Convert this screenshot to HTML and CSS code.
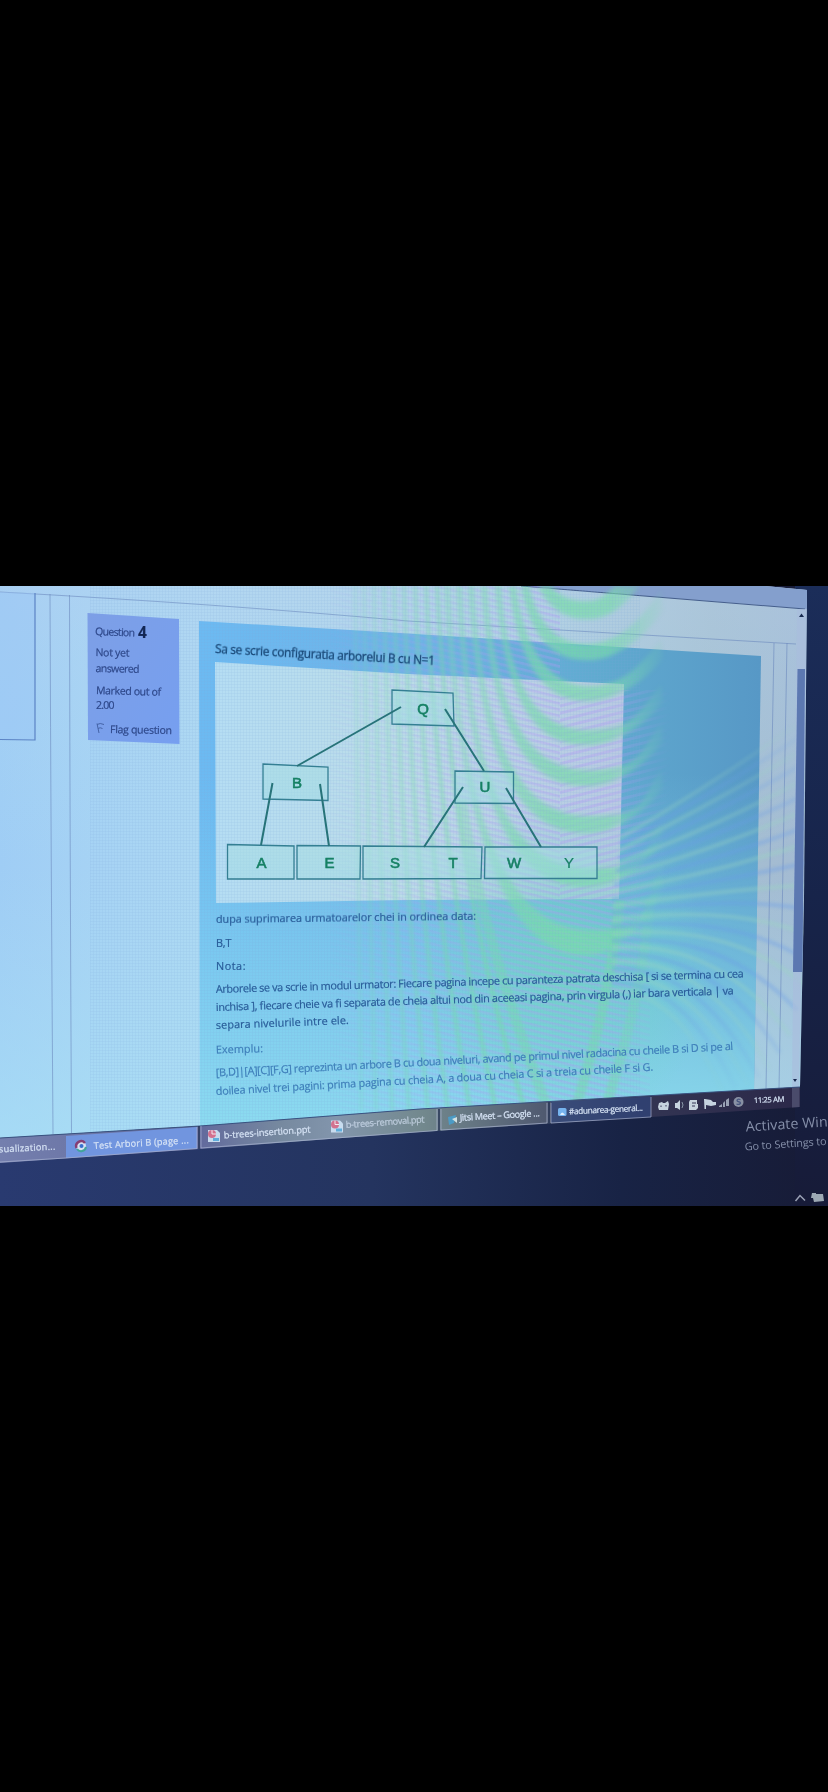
FILE: index.html
```html
<!DOCTYPE html>
<html lang="ro">
<head>
<meta charset="utf-8">
<title>Question 4</title>
<link rel="stylesheet" href="styles.css">
</head>
<body>
<main class="viewer">
<svg class="photo" viewBox="0 586 828 620" width="828" height="620">
<defs>
  <linearGradient id="desk" x1="0" y1="0" x2="1" y2="0"><stop offset="0" stop-color="#293a70"/><stop offset=".45" stop-color="#24345f"/><stop offset=".75" stop-color="#182345"/><stop offset="1" stop-color="#171b36"/></linearGradient>
  <linearGradient id="edge" x1="0" y1="0" x2="0" y2="1"><stop offset="0" stop-color="#1b2d59"/><stop offset=".5" stop-color="#17244a"/><stop offset="1" stop-color="#171b38"/></linearGradient>
  <linearGradient id="page" x1="0" y1="0" x2="1" y2="0"><stop offset="0" stop-color="#9fcdf5"/><stop offset=".25" stop-color="#aed9f3"/><stop offset=".6" stop-color="#b4d5e3"/><stop offset=".86" stop-color="#a5bfd0"/><stop offset="1" stop-color="#a3b9d3"/></linearGradient>
  <linearGradient id="pageGlow" x1="0" y1="0" x2="0" y2="1"><stop offset="0" stop-color="#b9d2ee" stop-opacity=".35"/><stop offset=".5" stop-color="#a8dcf3" stop-opacity="0"/><stop offset="1" stop-color="#a9e2f5" stop-opacity=".65"/></linearGradient>
  <linearGradient id="panel" x1="0" y1="0" x2="1" y2="0"><stop offset="0" stop-color="#6cbaf2"/><stop offset=".4" stop-color="#6db3e6"/><stop offset=".7" stop-color="#60abd0"/><stop offset="1" stop-color="#5798c6"/></linearGradient>
  <linearGradient id="panelGlow" x1="0" y1="0" x2="0" y2="1"><stop offset=".3" stop-color="#86d7ee" stop-opacity="0"/><stop offset="1" stop-color="#90dff0" stop-opacity=".9"/></linearGradient>
  <linearGradient id="sheet" x1="0" y1="0" x2="1" y2="0"><stop offset="0" stop-color="#b5ddf3"/><stop offset=".45" stop-color="#bcdde8"/><stop offset="1" stop-color="#b9c9e2"/></linearGradient>
  <linearGradient id="card" x1="0" y1="0" x2="1" y2="1"><stop offset="0" stop-color="#7d9fe6"/><stop offset="1" stop-color="#769ff0"/></linearGradient>
  <linearGradient id="node" x1="0" y1="0" x2="0" y2="1"><stop offset="0" stop-color="#a5dde0"/><stop offset="1" stop-color="#9fdbe3"/></linearGradient>
  <linearGradient id="bar" gradientUnits="userSpaceOnUse" x1="0" y1="0" x2="800" y2="0"><stop offset="0" stop-color="#747fae"/><stop offset=".25" stop-color="#626a9d"/><stop offset=".35" stop-color="#76899f"/><stop offset=".42" stop-color="#8295ac"/><stop offset=".53" stop-color="#72888d"/><stop offset=".66" stop-color="#556075"/><stop offset=".8" stop-color="#333553"/><stop offset="1" stop-color="#2b2849"/></linearGradient>
  <linearGradient id="fadeX" gradientUnits="userSpaceOnUse" x1="310" y1="0" x2="670" y2="0"><stop offset="0" stop-color="#000"/><stop offset=".35" stop-color="#999"/><stop offset=".7" stop-color="#fff"/><stop offset=".83" stop-color="#eee"/><stop offset="1" stop-color="#000"/></linearGradient>
  <linearGradient id="fadeArc" gradientUnits="userSpaceOnUse" x1="800" y1="700" x2="740" y2="1080"><stop offset="0" stop-color="#000"/><stop offset=".4" stop-color="#ccc"/><stop offset=".75" stop-color="#ccc"/><stop offset="1" stop-color="#222"/></linearGradient>
  <radialGradient id="mint"><stop offset="0" stop-color="#70d9bd" stop-opacity=".75"/><stop offset="1" stop-color="#70d9c4" stop-opacity="0"/></radialGradient>
  <mask id="bandMask" maskUnits="userSpaceOnUse" x="0" y="586" width="828" height="620"><rect x="0" y="586" width="828" height="620" fill="url(#fadeX)"/></mask>
  <mask id="arcMask" maskUnits="userSpaceOnUse" x="0" y="586" width="828" height="620"><rect x="600" y="690" width="220" height="430" fill="url(#fadeArc)"/></mask>
  <pattern id="fine" width="3" height="3" patternUnits="userSpaceOnUse"><path class="fine-line" d="M.5 0V3M0 .5H3"/></pattern>
  <pattern id="weave" width="8" height="6" patternUnits="userSpaceOnUse" patternTransform="rotate(14)"><rect width="8" height="2.6" fill="#b49af8"/></pattern>
  <pattern id="weaveUp" width="8" height="7" patternUnits="userSpaceOnUse" patternTransform="rotate(-14)"><rect width="8" height="3" fill="#b49af8"/></pattern>
  <clipPath id="screen"><path d="M0 586H765L807 590 804 900 800 1087 420 1109 200 1126 0 1138Z"/></clipPath>
  <g id="ppt"><path d="M1 1H10L13 4V13H1Z" fill="#c8dcef"/><circle cx="5" cy="5" r="4" fill="#d2718f"/><path d="M5 1V5H9" fill="none" stroke="#f3e7ee"/><path d="M6 9H12V12H6Z" fill="#5faddb"/></g>
</defs>

<rect x="0" y="586" width="828" height="620" fill="url(#desk)"/>
<rect x="795" y="586" width="33" height="620" fill="url(#edge)"/>

<g clip-path="url(#screen)">
  <rect x="0" y="586" width="828" height="560" fill="url(#page)"/>
  <rect x="0" y="586" width="828" height="560" fill="url(#pageGlow)"/>
  <path d="M521 586H807V609Z" fill="#849fcd"/>
  <path class="line-dark" d="M521 586Q650 597 805 609"/>
  <path class="line" d="M0 592Q220 604 408 621L796 644M774 643L766 1089M787 643L779 1089"/>
  <path class="line" d="M50 594Q51 860 53 1134M69.500 595Q70 860 71.500 1133"/>
  <path d="M0 592L35 593V740H0Z" fill="#98c5f6" opacity=".45"/>
  <path class="line-strong" d="M35 593V740L0 739.500"/>

  <path d="M199 621L400 633 761 656 758 850 754 1092 200 1128Z" fill="url(#panel)"/>
  <path d="M199 621L400 633 761 656 758 850 754 1092 200 1128Z" fill="url(#panelGlow)"/>
  <path d="M215 662L408 674 624 684 619 899 408 900 216 903Z" fill="url(#sheet)"/>

  <!-- interference bands -->
  <ellipse cx="560" cy="970" rx="150" ry="170" fill="url(#mint)"/>
  <g mask="url(#bandMask)">
    <path d="M330 586H560V1110H330Z" fill="url(#weave)" opacity=".36"/>
    <path d="M560 690H670V900H560Z" fill="url(#weaveUp)" opacity=".36"/>
    <path d="M560 900H650V1110H560Z" fill="url(#weave)" opacity=".36"/>
    <g class="valley">
      <path d="M538 586C550 612 570 620 590 619S625 605 640 586H615Q600 602 588 601Q565 603 551 586Z"/>
      <path d="M529 586C537 620 555 645 588 644S640 620 662 590L664 610S630 662 586 660C545 660 528 625 521 586Z"/>
      <path d="M516 586C524 650 550 686 588 686S640 664 662 640L664 658S630 702 586 701C542 701 518 660 509 586Z"/>
      <path d="M501 586C508 690 540 730 588 730S640 710 662 684L664 702S630 746 586 745C532 745 506 700 495 586Z"/>
      <path d="M487 586C495 720 532 770 588 770S640 750 662 724L664 742S630 787 586 786C525 786 492 730 481 586Z"/>
      <path d="M474 586C482 745 522 816 588 816S640 796 662 770L664 788S630 834 586 833C517 833 480 760 468 586Z"/>
      <path d="M462 586C470 790 516 868 588 868S640 848 662 822L664 842S630 888 586 887C510 887 469 800 456 586Z"/>
      <path d="M450 586C459 820 510 930 588 930S640 900 662 864L664 890S630 956 586 955C505 955 459 830 444 586Z"/>
    </g>
    <path class="band" d="M437 586C448 790 475 950 525 1110M426 586C435 780 455 920 496 1110M415 586C422 780 438 920 470 1110M404 586C410 780 422 930 448 1110M394 586C399 790 409 930 428 1110M384 586C388 790 396 930 409 1110M374 586C377 790 383 930 392 1110M364 586C367 790 370 930 376 1110M355 586L361 1110"/>
    <path class="band wide" d="M462 800C475 900 510 1010 548 1110M620 900C612 970 600 1030 575 1110M650 900C645 970 630 1030 605 1110"/>
  </g>
  <!-- arcs over the right margin -->
  <g mask="url(#arcMask)">
    <path class="arc-warm" d="M620 838Q720 780 810 715M618 851Q720 800 810 745M616 864Q720 825 810 776M614 878Q720 848 810 808M612 892Q720 872 810 842M612 906Q740 888 810 885M612 920Q730 904 810 935M612 934Q730 922 805 985M612 948Q715 938 790 1035M612 962Q705 955 770 1070M612 976Q690 972 748 1085M612 990Q675 990 722 1090"/>
    <path class="arc-cool" d="M620 844Q720 790 810 730M618 858Q720 812 810 760M616 871Q720 836 810 792M614 885Q720 860 810 825M612 899Q740 878 810 862M612 913Q735 895 810 910M612 927Q730 913 807 960M612 941Q720 930 797 1010M612 955Q710 947 780 1053M612 969Q697 963 759 1078M612 983Q682 980 735 1087"/>
  </g>
  <path d="M90 586H640V1140H90Z" fill="url(#fine)" opacity=".3"/>

  <!-- scroll bar -->
  <path d="M797 609H807L799 1088H792Z" fill="#a9bddd" opacity=".65"/>
  <path d="M797.500 669H805L802.500 972H793Z" fill="#5c78b1"/>
  <path d="M799 617L801.500 613.500 804 617Z" fill="#182a50"/>
  <path d="M793 1079H797L795 1082Z" fill="#182a50"/>
</g>

<g class="soft">
<path d="M87.500 613L179 619 179.500 744 88 740Z" fill="url(#card)"/>
<g class="ui meta">
  <text x="95" y="635" textLength="40" transform="rotate(2 95 635)">Question</text>
  <text class="number" x="138" y="637.500">4</text>
  <text x="95.500" y="656" textLength="34" transform="rotate(1 95 656)">Not yet</text>
  <text x="95.500" y="672" textLength="44" transform="rotate(1 95 672)">answered</text>
  <text x="96" y="694" textLength="65" transform="rotate(1.500 96 694)">Marked out of</text>
  <text x="96" y="709" textLength="18.500">2.00</text>
  <text x="110" y="733" textLength="62" transform="rotate(1 110 733)">Flag question</text>
</g>
<path class="flag" d="M97 723.500L99 733M97 724.500Q100 722.500 104 724.500M98 728.500Q100 727 102.500 728.500"/>

<text class="ui title" x="215" y="652.500" textLength="220" transform="rotate(3.100 215 652.500)">Sa se scrie configuratia arborelui B cu N=1</text>

<g class="nodes">
  <path d="M392 690L453 693 454 726 392 724Z"/>
  <path d="M263 764L328 767V800.500L263 799Z"/>
  <path d="M455 771L513.500 772V803.500L455 803Z"/>
  <path d="M227.500 844.500L294 846V879H227.500Z"/>
  <path d="M297 845.500L360.500 846 360 879H297Z"/>
  <path d="M363 846L482 847 481 878.500 363 879Z"/>
  <path d="M485 847H597V878.500H484.500Z"/>
</g>
<path class="links" d="M401 707L297 766M445 709L484 771M272.500 783L261 845M320 784L329 846M463 787L424 847M506 788L541 847"/>
<g class="keys">
  <text x="423" y="713.500">Q</text><text x="297" y="788">B</text><text x="485" y="792">U</text>
  <text x="261.500" y="867.500">A</text><text x="329.500" y="867.500">E</text><text x="395" y="867.500">S</text>
  <text x="453" y="867.500">T</text><text x="514" y="867.500">W</text><text class="thin" x="569" y="867.500">Y</text>
</g>

<g class="ui copy">
  <text x="216" y="922.500" textLength="260" transform="rotate(-.7 216 922)">dupa suprimarea urmatoarelor chei in ordinea data:</text>
  <text x="216" y="946.500" textLength="15.500">B,T</text>
  <text x="216" y="970" textLength="29.500">Nota:</text>
  <text x="216" y="993" textLength="528" transform="rotate(-1.700 216 993)">Arborele se va scrie in modul urmator: Fiecare pagina incepe cu paranteza patrata deschisa [ si se termina cu cea</text>
  <text x="216" y="1011" textLength="518" transform="rotate(-1.850 216 1011)">inchisa ], fiecare cheie va fi separata de cheia altui nod din aceeasi pagina, prin virgula (,) iar bara verticala | va</text>
  <text x="216" y="1029" textLength="133" transform="rotate(-2.200 216 1029)">separa nivelurile intre ele.</text>
  <g class="faint">
  <text x="216" y="1053.500" textLength="47" transform="rotate(-1.500 216 1053)">Exemplu:</text>
  <text x="216" y="1076.500" textLength="518" transform="rotate(-2.950 216 1076)">[B,D]|[A][C][F,G] reprezinta un arbore B cu doua niveluri, avand pe primul nivel radacina cu cheile B si D si pe al</text>
  <text x="216" y="1095" textLength="438" transform="rotate(-3.200 216 1095)">doilea nivel trei pagini: prima pagina cu cheia A, a doua cu cheia C si a treia cu cheile F si G.</text>
  </g>
</g>

<!-- task bar -->
<path d="M0 1138L200 1126 420 1109 800 1087V1107L651 1117 420 1132 200 1149 0 1163Z" fill="url(#bar)"/>
<path d="M66 1136L197 1127V1148.500L66 1158Z" fill="#7195df"/>
<path d="M551 1102L651 1096.500V1117L551 1123Z" fill="#2f477f" opacity=".65"/>
<path d="M792 1087.500L799.500 1087V1107L792 1107.500Z" fill="#4a4b6b"/>
<path d="M0 1138L200 1126 420 1109 800 1087" fill="none" stroke="#39517f"/>
<path class="button-edge" d="M0 1162L66 1158 197 1148.500V1127M201 1126V1148L322 1139 437 1130.500V1109M441 1109V1130L547 1123V1103M551 1103V1123L651 1117V1097"/>
<path class="button-gap" d="M199 1126V1149M439 1109V1131M549 1102V1124"/>
<g class="ui tasks">
  <text x="-1" y="1152.500" textLength="56.500" transform="rotate(-3 0 1152)">sualization...</text>
  <text x="94" y="1149" textLength="95" transform="rotate(-3.500 94 1149)">Test Arbori B (page ...</text>
  <text x="224" y="1138.500" textLength="87" transform="rotate(-4 224 1138)">b-trees-insertion.ppt</text>
  <text class="dim" x="346" y="1128" textLength="79" transform="rotate(-4 346 1128)">b-trees-removal.ppt</text>
  <text x="460" y="1121" textLength="80" transform="rotate(-3.500 460 1121)">Jitsi Meet – Google ...</text>
  <text class="narrow" x="569" y="1114.500" textLength="74" transform="rotate(-3 569 1114)">#adunarea-general...</text>
  <text class="clock" x="754" y="1103" textLength="30.500" transform="rotate(-2.500 754 1103)">11:25 AM</text>
</g>
<circle cx="81" cy="1146" r="5" fill="#d9e1f2"/><path d="M76.500 1148A5 5 0 0 1 85 1143" fill="none" stroke="#863f75" stroke-width="2.500"/><path d="M77 1149A5 5 0 0 0 86 1147" fill="none" stroke="#42a49b" stroke-width="2"/><circle cx="81.500" cy="1146" r="2" fill="#396fce"/>
<use href="#ppt" x="207" y="1129"/><use href="#ppt" x="330" y="1119.500"/>
<path d="M448 1117L456 1115 454 1123 449 1125Z" fill="#4c9bc5"/><path d="M452 1119L457 1117V1123Z" fill="#d1e1e3"/>
<rect x="558" y="1108" width="8.500" height="8" rx="1.500" fill="#76b3ee"/><path d="M560 1115Q562 1110 565 1115Z" fill="#deefff"/>

<g class="tray">
  <path d="M659 1103L662 1102 663 1103H665L668 1101 669 1104 668 1110H659L658 1107Z"/>
  <path d="M675 1103H677L680 1100V1110L677 1108H675Z"/><path class="tray-line" d="M682 1102Q684 1105 682 1108"/>
  <path d="M690 1100H697V1104H698V1108L696 1110H689V1102Z"/>
  <path d="M704 1099H705L711 1100 713 1102H716V1105L711 1106 706 1105V1109H704.500Z"/>
  <path d="M719 1106L722 1104V1107H719ZM723 1103L725 1101V1107H723ZM726 1100L729 1098V1106H726Z" opacity=".7"/>
  <circle cx="738.500" cy="1102" r="5" opacity=".6"/><path d="M740.500 1099.500Q737 1098.500 737 1100.500C737 1102.500 740.500 1101 740.500 1103Q740 1105 736.500 1104" fill="none" stroke="#48567f" stroke-width="1.300"/>
</g>
<path d="M661 1105.500V1107M666 1105V1106.500M692 1103H696M692 1106H695" stroke="#343656"/>

<g class="ui watermark">
  <text class="big" x="746" y="1131.500" textLength="82" transform="rotate(-3.500 746 1131)">Activate Win</text>
  <text x="745" y="1150.500" textLength="82" transform="rotate(-4 745 1150)">Go to Settings to</text>
</g>
<path d="M795.500 1201L800 1195.500 805 1200.500" fill="none" stroke="#9ba2b5" stroke-width="1.500"/>
<path d="M812 1193H816V1194H823L824 1201 814 1202 813 1198H811Z" fill="#9ca8b3"/>
</g>
</svg>
</main>
</body>
</html>
```
FILE: styles.css
```css
body {
  margin: 0;
  background: #000;
}

.viewer {
  display: flex;
  flex-direction: column;
  justify-content: flex-start;
  box-sizing: border-box;
  height: 1792px;
  padding-top: 586px;
  overflow: hidden;
}

.photo {
  display: block;
  flex: none;
}

.soft {
  filter: blur(0.35px);
}

.ui {
  font-family: "Open Sans", "Noto Sans", sans-serif;
}

.meta {
  font-size: 10.5px;
  fill: #2d4789;
  stroke: #2d4789;
  stroke-width: 0.2px;
}

.meta .number {
  font-size: 15.5px;
  font-weight: 700;
  fill: #122653;
}

.flag {
  fill: none;
  stroke: #4564a8;
  stroke-width: 1;
}

.title {
  font-size: 11.8px;
  fill: #174675;
  stroke: #174675;
  stroke-width: 0.3px;
}

.copy {
  font-size: 10.8px;
  fill: #285b98;
  stroke: #285b98;
  stroke-width: 0.2px;
}

.copy .faint {
  fill: #3e7eb9;
  stroke: #3e7eb9;
}

.line {
  fill: none;
  stroke: #6a87bd;
  stroke-width: 0.9;
  opacity: 0.65;
}

.line-strong {
  fill: none;
  stroke: #5b83c4;
  stroke-width: 1.2;
}

.line-dark {
  fill: none;
  stroke: #455e8c;
  stroke-width: 1.1;
}

.fine-line {
  fill: none;
  stroke: #7fa9dc;
  stroke-width: 0.4;
}

.valley {
  fill: #79dcaa;
  opacity: 0.72;
  filter: blur(2px);
}

.band {
  fill: none;
  stroke: #76dba5;
  stroke-width: 5;
  opacity: 0.62;
  filter: blur(1.5px);
}

.band.wide {
  stroke-width: 10;
  opacity: 0.5;
}

.arc-warm,
.arc-cool {
  fill: none;
  stroke-width: 4.5;
  filter: blur(1.5px);
}

.arc-warm {
  stroke: #9ad6c0;
  opacity: 0.42;
}

.arc-cool {
  stroke: #6b9ce8;
  opacity: 0.42;
}

.nodes {
  fill: url(#node);
  fill-opacity: 0.5;
  stroke: #347f93;
  stroke-width: 1.3;
}

.links {
  fill: none;
  stroke: #277379;
  stroke-width: 2;
}

.keys {
  font-family: "Liberation Sans", Arial, sans-serif;
  font-size: 15px;
  text-anchor: middle;
  fill: #168064;
  stroke: #168064;
  stroke-width: 0.6px;
}

.keys .thin {
  stroke-width: 0.2px;
}

.button-edge {
  fill: none;
  stroke: #aab5d2;
  stroke-width: 0.9;
  opacity: 0.75;
}

.button-gap {
  stroke: #293657;
  stroke-width: 1.5;
}

.tasks {
  font-size: 9.2px;
  fill: #d6e3f5;
  stroke: #d6e3f5;
  stroke-width: 0.2px;
}

.tasks .dim {
  opacity: 0.7;
}

.tasks .narrow {
  font-size: 8.4px;
}

.tasks .clock {
  font-size: 7.6px;
}

.tray {
  fill: #c6d3df;
}

.tray-line {
  fill: none;
  stroke: #8996a8;
}

.watermark {
  font-size: 10.8px;
  fill: #858fa9;
}

.watermark .big {
  font-size: 14.2px;
}
```
